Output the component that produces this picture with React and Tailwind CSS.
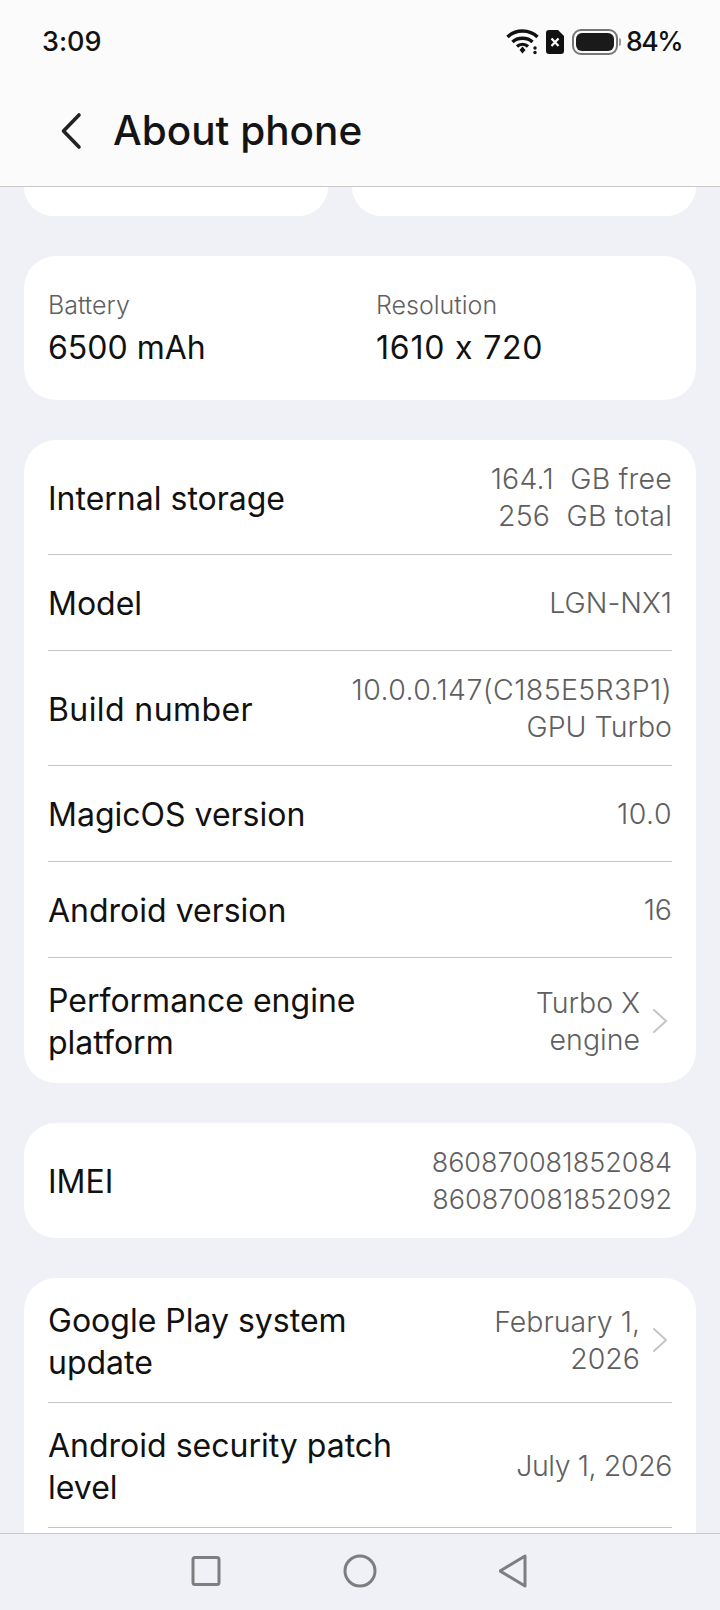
const Chevron = () => (
  <svg width="16" height="26" viewBox="0 0 16 26" fill="none" className="shrink-0 ml-[12px] mr-[4px]">
    <path d="M2 2 L14 13 L2 24" stroke="#c4c5c7" strokeWidth="2" strokeLinecap="round" strokeLinejoin="round" />
  </svg>
)

const Row = ({ label, value, arrow, h, last, labelClass, valueClass }) => (
  <div className={`flex items-center justify-between ${h} ${last ? '' : 'border-b border-[#c4c4c6]'}`}>
    <div className={`text-[32px] leading-[42px] text-[#111111] max-w-[370px] pt-[3px] ${labelClass || ''}`}>{label}</div>
    <div className="flex items-center">
      <div className={`leading-[37px] text-[#5f5f61] text-right whitespace-pre-wrap font-light ${valueClass || 'text-[28.5px]'}`}>{value}</div>
      {arrow && <Chevron />}
    </div>
  </div>
)

const Card = ({ children, className }) => (
  <div className={`bg-white rounded-[32px] px-6 ${className || ''}`}>{children}</div>
)

export default function App() {
  return (
    <div className="w-[720px] h-[1610px] flex flex-col overflow-hidden bg-[#f0f1f7] font-['Inter',sans-serif] [font-feature-settings:'calt'_0]">
      {/* Header */}
      <div className="h-[187px] shrink-0 bg-[#fbfbfc] border-b border-[#c9cacc]">
        <div className="flex items-center justify-between pt-[24px] pl-[42px] pr-[38px] h-[60px]">
          <span className="text-[27px] font-medium text-[#111111]">3:09</span>
          <div className="flex items-center">
            <svg width="35" height="26" viewBox="0 0 34 26" className="mr-[6px]">
              <path d="M2 8 C10 0 24 0 32 8" stroke="#111" strokeWidth="3.4" fill="none" />
              <path d="M7 13 C12 8 22 8 27 13" stroke="#111" strokeWidth="3.4" fill="none" />
              <path d="M11.500 17.500 C14.500 14.500 19.500 14.500 22.500 17.500" stroke="#111" strokeWidth="3.2" fill="none" />
              <path d="M14 21 L17 17.500 L20 21 L17 24.500 Z" fill="#111" />
              <circle cx="29.500" cy="19" r="1.700" fill="#111" />
              <circle cx="29.500" cy="23.500" r="1.700" fill="#111" />
            </svg>
            <svg width="18" height="24" viewBox="0 0 18 24" className="mr-[8px]">
              <path d="M3 0 H12 L18 6 V21 A3 3 0 0 1 15 24 H3 A3 3 0 0 1 0 21 V3 A3 3 0 0 1 3 0 Z" fill="#111" />
              <path d="M5.500 8.500 L12.500 16 M12.500 8.500 L5.500 16" stroke="#fff" strokeWidth="2.200" />
            </svg>
            <div className="w-[46px] h-[26px] rounded-[9px] border-2 border-[#77777a] p-[2px]">
              <div className="w-full h-full rounded-[6px] bg-[#1a1a1a]" />
            </div>
            <div className="w-[2px] h-[8px] bg-[#9a9a9c] ml-[1px] mr-[5px] rounded-r" />
            <span className="text-[26.5px] font-medium tracking-[-1.5px] text-[#111111]">84%</span>
          </div>
        </div>
        <div className="flex items-center pl-[60px] pt-[48px]">
          <svg width="22" height="38" viewBox="0 0 22 38" fill="none">
            <path d="M19 3 L3.500 19 L19 35" stroke="#222" strokeWidth="3.600" strokeLinecap="round" strokeLinejoin="round" />
          </svg>
          <span className="ml-[31px] text-[40.5px] leading-[46px] font-medium text-[#141414]">About phone</span>
        </div>
      </div>

      {/* Content */}
      <div className="flex-1 min-h-0 overflow-hidden px-6">
        <div className="flex gap-6 h-[29px]">
          <div className="w-[304px] bg-white rounded-b-[32px]" />
          <div className="w-[344px] bg-white rounded-b-[32px]" />
        </div>

        <Card className="mt-[40px] h-[144px] flex items-center pt-[4px]">
          <div className="w-[328px]">
            <div className="text-[25px] leading-[32px] font-light text-[#5f5f61] -mt-[2px]">Battery</div>
            <div className="text-[32px] leading-[42px] text-[#111111] mt-[6px]">6500 mAh</div>
          </div>
          <div>
            <div className="text-[25px] leading-[32px] font-light text-[#5f5f61] -mt-[2px]">Resolution</div>
            <div className="text-[32px] leading-[42px] tracking-[0.8px] text-[#111111] mt-[6px]">1610 x 720</div>
          </div>
        </Card>

        <Card className="mt-[40px]">
          <Row label="Internal storage" value={'164.1  GB free\n256  GB total'} valueClass="text-[28.5px] tracking-[0.2px]" h="h-[115px]" />
          <Row label="Model" value="LGN-NX1" h="h-[96px]" />
          <Row label="Build number" labelClass="tracking-[0.4px]" value={<><span className="tracking-[0.4px]">10.0.0.147(C185E5R3P1)</span>{'\nGPU Turbo'}</>} h="h-[115px]" />
          <Row label="MagicOS version" value="10.0" valueClass="text-[28.5px] tracking-[0.5px]" h="h-[96px]" />
          <Row label="Android version" value="16" h="h-[96px]" />
          <Row label="Performance engine platform" value={'Turbo X\nengine'} arrow h="h-[125px]" last />
        </Card>

        <Card className="mt-[40px]">
          <Row label="IMEI" value={'860870081852084\n860870081852092'} valueClass="text-[27px]" h="h-[115px]" last />
        </Card>

        <Card className="mt-[40px] rounded-b-none h-[300px]">
          <Row label="Google Play system update" value={'February 1,\n2026'} arrow h="h-[125px]" />
          <Row label="Android security patch level" value="July 1, 2026" valueClass="text-[28.5px] tracking-[-0.4px]" h="h-[125px]" />
        </Card>
      </div>

      {/* Nav bar */}
      <div className="h-[77px] shrink-0 bg-[#f0f1f7] border-t border-[#c9cacc] flex items-center justify-center gap-[122px] pb-[2px]">
        <svg width="30" height="30" viewBox="0 0 30 30" fill="none">
          <rect x="2" y="1.500" width="26" height="27" rx="2" stroke="#7d7e80" strokeWidth="3" />
        </svg>
        <svg width="34" height="34" viewBox="0 0 34 34" fill="none">
          <circle cx="17" cy="17" r="15" stroke="#7d7e80" strokeWidth="3" />
        </svg>
        <svg width="30" height="34" viewBox="0 0 30 34" fill="none">
          <path d="M26 2 V32 L1 17 Z" stroke="#7d7e80" strokeWidth="3" strokeLinejoin="round" />
        </svg>
      </div>
    </div>
  )
}
